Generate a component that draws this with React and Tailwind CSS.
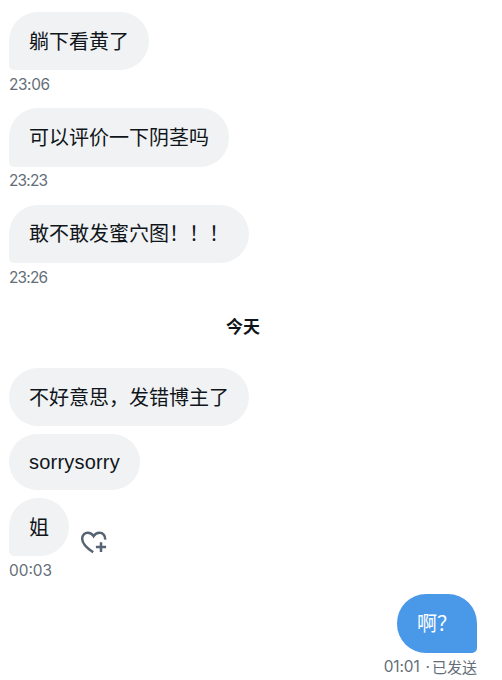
import React from "react";

function Bubble({ children, className = "", tail = true }) {
  return (
    <div
      className={`flex w-fit items-center rounded-[29px] bg-[#f0f2f4] px-5 text-[20px] leading-[26px] text-[#10151a] ${tail ? "rounded-bl-[5px]" : ""} ${className}`}
    >
      <span className="whitespace-nowrap">{children}</span>
    </div>
  );
}

function Time({ children, className = "" }) {
  return (
    <div className={`flex h-[28px] items-center pt-[1px] text-[15.4px] leading-none text-[#646e78] ${className}`}>
      {children}
    </div>
  );
}

function HeartPlus() {
  return (
    <svg
      className="h-[24px] w-[28px]"
      viewBox="0 0 28 24"
      fill="none"
      stroke="#566371"
      strokeWidth="2.5"
    >
      <path d="M13.2 22.2C7.2 18.4 2.2 13.8 2.2 8.8C2.2 5.2 4.6 2.8 7.8 2.8C10.3 2.8 12.2 4 13.6 6.2C15 4 17 2.8 19.5 2.8C22.8 2.8 25.4 5.2 25.2 9.6" />
      <path d="M21 12.2V22M15.9 17.1H26.1" />
    </svg>
  );
}

export default function App() {
  return (
    <main
      className="flex h-[680px] w-[502px] flex-col overflow-hidden bg-white pt-[11.5px] pr-[25px] pl-[9px] font-['Inter','Noto_Sans_CJK_SC',sans-serif]"
      lang="zh-CN"
    >
      <section className="h-[96.5px] shrink-0">
        <Bubble className="h-[58.5px] pt-[3px]">躺下看黄了</Bubble>
        <Time className="tracking-[-0.4px]">23:06</Time>
      </section>
      <section className="h-[96.5px] shrink-0">
        <Bubble className="h-[58.5px] pt-[2px]">可以评价一下阴茎吗</Bubble>
        <Time className="tracking-[-0.8px]">23:23</Time>
      </section>
      <section className="h-[96.5px] shrink-0">
        <Bubble className="h-[58.5px] pt-[1px]">敢不敢发蜜穴图！！！</Bubble>
        <Time className="tracking-[-0.8px]">23:26</Time>
      </section>
      <div className="flex h-[66.5px] shrink-0 items-start justify-center pt-[17.5px] text-[17px] font-bold leading-none text-[#10151a]">
        今天
      </div>
      <section className="flex shrink-0 flex-col gap-2">
        <Bubble tail={false} className="h-[58.5px] pt-[1.5px]">不好意思，发错博主了</Bubble>
        <Bubble
          tail={false}
          className="h-[56px] font-['Liberation_Sans',sans-serif] tracking-[0.2px]"
        >
          sorrysorry
        </Bubble>
        <div>
          <div className="flex items-end gap-[11px]">
            <Bubble className="h-[58px] pt-[2px]">姐</Bubble>
            <div className="pb-[2.5px]">
              <HeartPlus />
            </div>
          </div>
          <Time>00:03</Time>
        </div>
      </section>
      <section className="flex shrink-0 flex-col items-end pt-[10px]">
        <div className="flex h-[58.5px] w-fit items-center rounded-[29px] rounded-br-[5px] bg-[#4a99e9] px-5 pt-[1px] text-[20px] leading-[26px] text-white">
          <span className="whitespace-nowrap">啊？</span>
        </div>
        <Time>
          <span className="tracking-[-0.1px]">01:01</span>
          <span className="mr-[2px] ml-[6px]">·</span>
          <span className="text-[15px]">已发送</span>
        </Time>
      </section>
    </main>
  );
}
